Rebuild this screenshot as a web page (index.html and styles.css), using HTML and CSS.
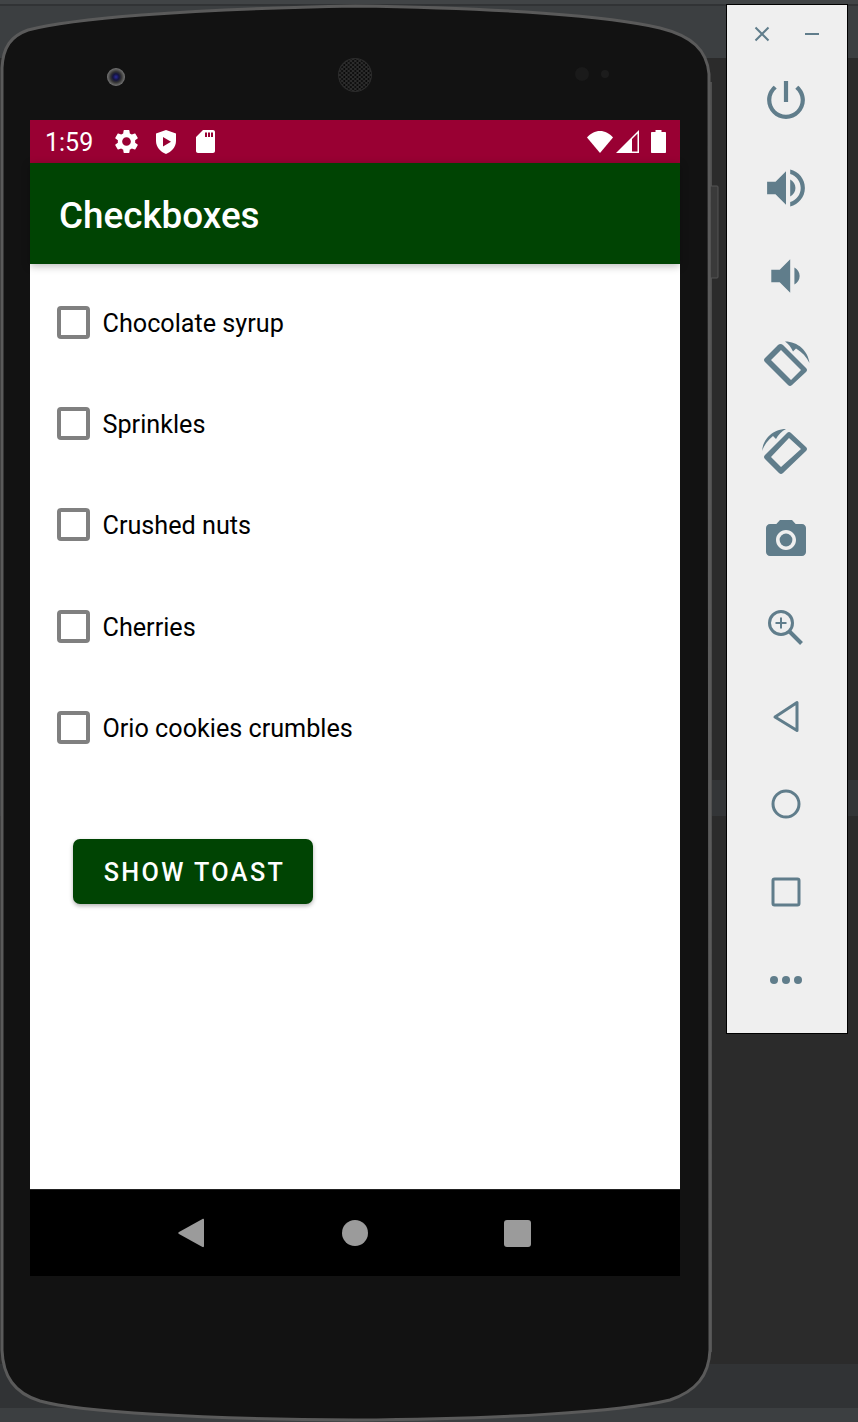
FILE: index.html
```html
<!DOCTYPE html>
<html lang="en">
<head>
<meta charset="utf-8">
<title>Checkboxes</title>
<link rel="stylesheet" href="styles.css">
</head>
<body>
<div class="desk">
  <div class="bands">
    <div class="band-top"></div>
    <div class="band-work"></div>
    <div class="band-mid"></div>
    <div class="band-work-b"></div>
    <div class="band-tabs"></div>
    <div class="band-status"></div>
  </div>

  <div class="phone">
    <svg class="phone-body" width="730" height="1422" viewBox="0 0 730 1422">
      <defs>
        <pattern id="mesh" width="4.4" height="4" patternUnits="userSpaceOnUse">
          <circle cx="1.1" cy="1" r="1" fill="#050505"/>
          <circle cx="3.3" cy="3" r="1" fill="#050505"/>
        </pattern>
        <radialGradient id="lens">
          <stop offset="0" stop-color="#2a2a9a"/>
          <stop offset="0.35" stop-color="#14143c"/>
          <stop offset="0.6" stop-color="#333"/>
          <stop offset="1" stop-color="#777"/>
        </radialGradient>
      </defs>
      <rect class="side-thin" x="708" y="82" width="4" height="1270"/>
      <rect class="side-key" x="710" y="186" width="8" height="92" rx="1"/>
      <path class="shell" d="M2 68 C3 47 11 36 28 30 C70 19 180 9 355 6 C500 8 610 16 660 28 C692 36 707 50 709 74 L710 1350 C709 1376 696 1391 670 1400 C620 1412 500 1419 355 1420 C200 1419 80 1412 40 1401 C14 1393 3 1376 2 1350 Z"/>
      <circle cx="116" cy="77" r="9" fill="url(#lens)"/>
      <circle cx="355" cy="75" r="17" fill="#2c2c2c"/>
      <circle cx="355" cy="75" r="16" fill="url(#mesh)"/>
      <circle cx="582" cy="74" r="7" fill="#1a1a1a"/>
      <circle cx="605" cy="74" r="4" fill="#1c1c1c"/>
    </svg>

    <div class="screen">
      <div class="status">
        <span class="time">1:59</span>
        <svg class="st st-gear" viewBox="0 0 24 24"><path d="M19.14 12.94c.04-.3.06-.61.06-.94 0-.32-.02-.64-.07-.94l2.03-1.58c.18-.14.23-.41.12-.61l-1.92-3.32c-.12-.22-.37-.29-.59-.22l-2.39.96c-.5-.38-1.03-.7-1.62-.94l-.36-2.54c-.04-.24-.24-.41-.48-.41h-3.84c-.24 0-.43.17-.47.41l-.36 2.54c-.59.24-1.13.57-1.62.94l-2.39-.96c-.22-.08-.47 0-.59.22L2.74 8.87c-.12.21-.08.47.12.61l2.03 1.58c-.05.3-.09.63-.09.94s.02.64.07.94l-2.03 1.58c-.18.14-.23.41-.12.61l1.92 3.32c.12.22.37.29.59.22l2.39-.96c.5.38 1.03.7 1.62.94l.36 2.54c.05.24.24.41.48.41h3.84c.24 0 .44-.17.47-.41l.36-2.54c.59-.24 1.13-.56 1.62-.94l2.39.96c.22.08.47 0 .59-.22l1.92-3.32c.12-.22.07-.47-.12-.61l-2.01-1.58zM12 15.6c-1.98 0-3.6-1.62-3.6-3.6s1.62-3.6 3.6-3.6 3.6 1.62 3.6 3.6-1.62 3.6-3.6 3.6z"/></svg>
        <svg class="st st-shield" viewBox="0 0 20 24"><path fill-rule="evenodd" d="M10 0 L20 3.6 V11 C20 17 15.5 22 10 24 C4.500 22 0 17 0 11 V3.600 Z M7 7 V16.500 L15 11.700 Z"/></svg>
        <svg class="st st-sd" viewBox="0 0 19 23"><path fill-rule="evenodd" d="M7 0 H17 C18.100 0 19 .9 19 2 V21 C19 22.100 18.100 23 17 23 H2 C.9 23 0 22.100 0 21 V7 Z M9 2.500 V7 H11 V2.500 Z M12 2.500 V7 H14 V2.500 Z M15 2.500 V7 H17 V2.500 Z"/></svg>
        <span class="status-gap"></span>
        <svg class="st st-wifi" viewBox="0 0 26 22"><path d="M13 22 L0 6.500 C3.500 2.500 8 0 13 0 C18 0 22.500 2.500 26 6.500 Z"/></svg>
        <svg class="st st-signal" viewBox="0 0 23 23"><path fill-rule="evenodd" d="M23 0 V23 H0 Z M21.500 3.600 L16 9.100 V21.500 H21.500 Z"/></svg>
        <svg class="st st-battery" viewBox="0 0 15 23"><path d="M4.500 0 H10.500 V2 H14 C14.600 2 15 2.400 15 3 V22 C15 22.600 14.600 23 14 23 H1 C.4 23 0 22.600 0 22 V3 C0 2.400 .4 2 1 2 H4.500 Z"/></svg>
      </div>
      <header class="appbar">Checkboxes</header>
      <main class="content">
        <ul class="checks">
          <li class="check"><span class="box"></span>Chocolate syrup</li>
          <li class="check"><span class="box"></span>Sprinkles</li>
          <li class="check"><span class="box"></span>Crushed nuts</li>
          <li class="check"><span class="box"></span>Cherries</li>
          <li class="check"><span class="box"></span>Orio cookies crumbles</li>
        </ul>
        <button class="toast" type="button">Show Toast</button>
      </main>
      <nav class="navbar">
        <svg class="nav nav-back" viewBox="0 0 26 30"><path d="M24.500 1 C25.300 .6 26 1 26 2 V28 C26 29 25.300 29.400 24.500 29 L1 16 C0 15.400 0 14.600 1 14 Z"/></svg>
        <span class="nav nav-home"></span>
        <span class="nav nav-recent"></span>
      </nav>
    </div>
  </div>

  <aside class="tools">
    <div class="tools-head">
      <svg class="head-icon" viewBox="0 0 16 16"><path d="M1.500 1.500 L14.500 14.500 M14.500 1.500 L1.500 14.500"/></svg>
      <svg class="head-icon" viewBox="0 0 16 16"><path d="M1 8 H15"/></svg>
    </div>
    <button class="tool" type="button" aria-label="Power"><svg viewBox="-30 -30 60 60"><path transform="scale(2.1) translate(-12,-12)" d="M13 3h-2v10h2V3zm4.830 2.170l-1.420 1.420C17.990 7.860 19 9.810 19 12c0 3.870-3.130 7-7 7s-7-3.130-7-7c0-2.190 1.010-4.140 2.580-5.420L6.170 5.170C4.230 6.820 3 9.260 3 12c0 4.970 4.030 9 9 9s9-4.030 9-9c0-2.740-1.230-5.180-3.170-6.830z"/></svg></button>
    <button class="tool" type="button" aria-label="Volume up"><svg viewBox="-30 -30 60 60"><path transform="scale(2.1) translate(-12,-12)" d="M3 9v6h4l5 5V4L7 9H3zm13.500 3c0-1.770-1.020-3.290-2.500-4.030v8.050c1.480-.73 2.500-2.250 2.500-4.020zM14 3.230v2.060c2.890.86 5 3.540 5 6.710s-2.110 5.850-5 6.710v2.060c4.010-.91 7-4.490 7-8.770s-2.990-7.860-7-8.770z"/></svg></button>
    <button class="tool" type="button" aria-label="Volume down"><svg viewBox="-30 -30 60 60"><path transform="scale(2.1) translate(-12,-12)" d="M18.500 12c0-1.770-1.020-3.290-2.500-4.030v8.050c1.480-.73 2.500-2.250 2.500-4.020zM5 9v6h4l5 5V4L9 9H5z"/></svg></button>
    <button class="tool" type="button" aria-label="Rotate right"><svg viewBox="-30 -30 60 60"><g transform="translate(-786,-364)"><path fill-rule="evenodd" d="M778 345 L765 358 Q763 360 765 362 L788 385 Q790 387 792 385 L806 372 Q808 370 806 368 L783 345 Q780.500 343 778 345 Z M781 350 L771 360 L791 380 L801 370 Z"/><path d="M785 341.500 C798 341.500 808 351 809.500 363 C806.500 357 802 352 796 348.500 L793 351.500 C791 347 788.500 344 785 341.500 Z"/></g></svg></button>
    <button class="tool" type="button" aria-label="Rotate left"><svg viewBox="-30 -30 60 60"><g transform="translate(-786,-452)"><path fill-rule="evenodd" d="M787 433 L765 455 Q763 457 765 459 L779 473 Q781 475 783 473 L806 451 Q808 449 806 447 L791 433 Q789 431 787 433 Z M789 438 L771 457 L781 467 L801 449 Z"/><path d="M786 429 C773 429 763 439 762 451 C764 445 768 440 773 436 L776 439 C778 435 782 431 786 429 Z"/></g></svg></button>
    <button class="tool" type="button" aria-label="Camera"><svg viewBox="-30 -30 60 60"><g transform="scale(2) translate(-12,-12)"><circle cx="12" cy="12" r="3.200"/><path d="M9 2L7.170 4H4c-1.100 0-2 .9-2 2v12c0 1.100.9 2 2 2h16c1.100 0 2-.9 2-2V6c0-1.100-.9-2-2-2h-3.170L15 2H9zm3 15c-2.760 0-5-2.240-5-5s2.240-5 5-5 5 2.240 5 5-2.240 5-5 5z"/></g></svg></button>
    <button class="tool" type="button" aria-label="Zoom"><svg class="line" viewBox="-30 -30 60 60"><circle cx="-5" cy="-5" r="11.500"/><path d="M3.500 3.500 L15.500 15.500" class="thick"/><path d="M-5 -10.500 V0.500 M-10.500 -5 H0.500" class="thin"/></svg></button>
    <button class="tool" type="button" aria-label="Back"><svg class="line" viewBox="-30 -30 60 60"><path d="M-11 1 L11 -13.500 V14.500 Z"/></svg></button>
    <button class="tool" type="button" aria-label="Home"><svg class="line" viewBox="-30 -30 60 60"><circle r="13"/></svg></button>
    <button class="tool" type="button" aria-label="Overview"><svg class="line" viewBox="-30 -30 60 60"><rect x="-13" y="-13" width="26" height="26" rx="1.500"/></svg></button>
    <button class="tool" type="button" aria-label="More"><svg viewBox="-30 -30 60 60"><circle cx="-12" r="4"/><circle r="4"/><circle cx="12" r="4"/></svg></button>
  </aside>
</div>
</body>
</html>
```

FILE: styles.css
```css
* { box-sizing: border-box; }

html, body { margin: 0; padding: 0; }

body {
  width: 858px;
  height: 1422px;
  overflow: hidden;
  font-family: Roboto, "Liberation Sans", sans-serif;
}

.desk {
  position: relative;
  width: 858px;
  height: 1422px;
}

/* IDE chrome behind the emulator */
.bands {
  display: flex;
  flex-direction: column;
  height: 100%;
}
.band-top {
  height: 58px;
  background: #3c3f41;
  border-top: 4px solid #414446;
  box-shadow: inset 0 2px 0 #313335;
}
.band-work { height: 722px; background: #2b2b2b; }
.band-mid { height: 36px; background: #333537; }
.band-work-b { height: 548px; background: #2b2b2b; }
.band-tabs { height: 44px; background: #313335; }
.band-status { flex: 1; background: #3c3f41; }

/* Phone */
.phone {
  position: absolute;
  left: 0;
  top: 0;
  width: 730px;
  height: 1422px;
  padding: 120px 0 0 30px;
}
.phone-body { position: absolute; left: 0; top: 0; }
.shell { fill: #121212; stroke: #5a5a5a; stroke-width: 3; }
.side-thin { fill: #4e4e4e; }
.side-key { fill: #3a3a3a; stroke: #555; }

.screen {
  position: relative;
  display: flex;
  flex-direction: column;
  width: 650px;
  height: 1156px;
  background: #fff;
}

.status {
  display: flex;
  align-items: center;
  height: 43px;
  padding: 0 14px 0 15px;
  background: #990033;
  color: #fff;
}
.time { width: 54px; padding-top: 2px; font-size: 25px; line-height: 41px; }
.st { display: block; fill: #fff; flex: none; }
.st-gear { width: 29px; height: 29px; margin: 0 0 0 13px; }
.st-shield { width: 20px; height: 24px; margin-left: 15px; }
.st-sd { width: 19px; height: 23px; margin-left: 20px; }
.status-gap { flex: 1; }
.st-wifi { width: 26px; height: 22px; }
.st-signal { width: 23px; height: 23px; margin-left: 3px; }
.st-battery { width: 15px; height: 23px; margin-left: 12px; }

.appbar {
  position: relative;
  z-index: 1;
  height: 101px;
  padding-left: 29px;
  background: #004403;
  color: #fff;
  font-size: 36.8px;
  font-weight: 500;
  line-height: 105px;
  box-shadow: 0 2px 8px rgba(0, 0, 0, 0.28);
}

.content {
  flex: 1;
  padding-top: 8px;
  background: #fff;
}
.checks { margin: 0; padding: 1px 0 0; list-style: none; }
.check {
  display: flex;
  align-items: center;
  gap: 12.5px;
  height: 101.2px;
  padding-left: 27px;
  color: #000;
  font-size: 25.2px;
}
.box {
  flex: none;
  width: 33px;
  height: 33px;
  margin-bottom: 2px;
  border: 4px solid #808080;
  border-radius: 4px;
  background: #fff;
}
.toast {
  display: block;
  width: 240px;
  height: 65px;
  margin: 60px 0 0 43px;
  padding: 2px 0 0 3px;
  border: 0;
  border-radius: 7px;
  background: #004403;
  color: #fff;
  font: 500 25.2px Roboto, "Liberation Sans", sans-serif;
  letter-spacing: 2.4px;
  text-transform: uppercase;
  box-shadow: 0 2px 4px rgba(0, 0, 0, 0.3);
}

.navbar {
  display: flex;
  align-items: center;
  height: 87px;
  padding-left: 148px;
  border-top: 1px solid #222;
  background: #000;
}
.nav { display: block; flex: none; }
.nav-back { width: 26px; height: 30px; fill: #9b9b9b; }
.nav-home {
  width: 26px;
  height: 26px;
  margin-left: 138px;
  border-radius: 50%;
  background: #9b9b9b;
}
.nav-recent {
  width: 27px;
  height: 27px;
  margin-left: 136px;
  border-radius: 3px;
  background: #9b9b9b;
}

/* Emulator toolbar */
.tools {
  position: absolute;
  left: 726px;
  top: 4px;
  width: 122px;
  height: 1030px;
  padding: 7px 2px 0 0;
  border: 1px solid #000;
  background: #efefef;
}
.tools-head {
  display: flex;
  justify-content: space-between;
  height: 44px;
  padding: 14px 25px 0 27px;
}
.head-icon {
  display: block;
  width: 16px;
  height: 16px;
  fill: none;
  stroke: #607d8b;
  stroke-width: 2;
}
.tool {
  display: flex;
  align-items: center;
  justify-content: center;
  width: 100%;
  height: 88px;
  padding: 0;
  border: 0;
  background: none;
}
.tool svg {
  display: block;
  width: 60px;
  height: 60px;
  fill: #607d8b;
}
.tool svg.line {
  fill: none;
  stroke: #607d8b;
  stroke-width: 3;
  stroke-linejoin: round;
}
.tool svg .thick { stroke-width: 4; }
.tool svg .thin { stroke-width: 2; }
```
